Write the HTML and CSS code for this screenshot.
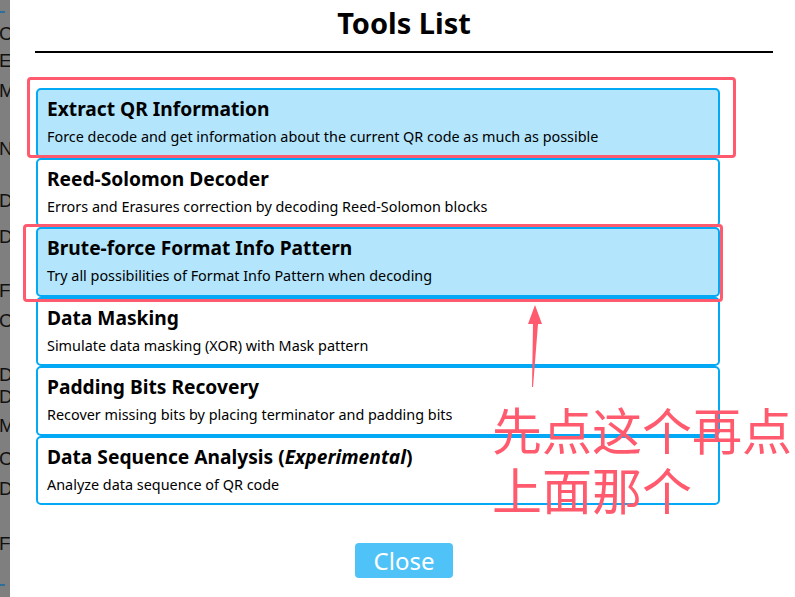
FILE: index.html
```html
<!DOCTYPE html>
<html lang="en">
<head>
<meta charset="utf-8">
<title>Tools List</title>
<link rel="stylesheet" href="styles.css">
</head>
<body>
<div class="backdrop">
  <div class="bg-rule"></div>
  <div class="l">C</div><div class="l">E</div><div class="l">M</div><div class="l">N</div>
  <div class="l">D</div><div class="l">D</div><div class="l">F</div><div class="l">C</div>
  <div class="l">D</div><div class="l">D</div><div class="l">M</div><div class="l">C</div>
  <div class="l">D</div><div class="l">F</div>
  <div class="bg-rule bottom"></div>
</div>
<div class="modal">
  <h1 class="title">Tools List</h1>
  <hr class="rule">
  <div class="list">
    <div class="card active">
      <div class="card-title">Extract QR Information</div>
      <div class="card-desc">Force decode and get information about the current QR code as much as possible</div>
    </div>
    <div class="card">
      <div class="card-title">Reed-Solomon Decoder</div>
      <div class="card-desc">Errors and Erasures correction by decoding Reed-Solomon blocks</div>
    </div>
    <div class="card active">
      <div class="card-title">Brute-force Format Info Pattern</div>
      <div class="card-desc">Try all possibilities of Format Info Pattern when decoding</div>
    </div>
    <div class="card">
      <div class="card-title">Data Masking</div>
      <div class="card-desc">Simulate data masking (XOR) with Mask pattern</div>
    </div>
    <div class="card">
      <div class="card-title">Padding Bits Recovery</div>
      <div class="card-desc">Recover missing bits by placing terminator and padding bits</div>
    </div>
    <div class="card">
      <div class="card-title">Data Sequence Analysis (<em>Experimental</em>)</div>
      <div class="card-desc">Analyze data sequence of QR code</div>
    </div>
  </div>
  <div class="footer"><button class="close-btn">Close</button></div>

  <div class="mark mark-1"></div>
  <div class="mark mark-2"></div>
  <svg class="arrow" width="30" height="90" viewBox="0 0 30 90">
    <polygon points="14,0 21,19 17,19 12,82 11,82 12,19 7,19" fill="#ff5a6e"/>
  </svg>
  <div class="note">先点这个再点<br>上面那个</div>
</div>
</body>
</html>
```
FILE: styles.css
```css
* { box-sizing: border-box; }
html, body { margin: 0; padding: 0; }
body {
  width: 795px;
  height: 597px;
  overflow: hidden;
  display: flex;
  font-family: "Noto Sans", "Open Sans", sans-serif;
  color: #000;
  background: #fff;
}
.backdrop {
  width: 10px;
  flex: none;
  background: #7f7f7f;
  overflow: hidden;
  display: flex;
  flex-direction: column;
  font-family: "Liberation Sans", sans-serif;
  font-size: 19px;
  line-height: 20px;
  color: #111;
}
.bg-rule { width: 5px; height: 2px; background: #2c6f9c; margin-top: 11px; flex: none; }
.bg-rule.bottom { margin-top: 30px; }
.l { height: 20px; flex: none; margin-left: -1px; }
.l:nth-child(2) { margin-top: 11px; }
.l:nth-child(3) { margin-top: 7px; }
.l:nth-child(4) { margin-top: 10px; }
.l:nth-child(5) { margin-top: 38px; }
.l:nth-child(6) { margin-top: 32px; }
.l:nth-child(7) { margin-top: 16px; }
.l:nth-child(8) { margin-top: 34px; }
.l:nth-child(9) { margin-top: 10px; }
.l:nth-child(10) { margin-top: 34px; }
.l:nth-child(11) { margin-top: 2px; }
.l:nth-child(12) { margin-top: 9px; }
.l:nth-child(13) { margin-top: 13px; }
.l:nth-child(14) { margin-top: 10px; }
.l:nth-child(15) { margin-top: 35px; }

.modal {
  flex: 1;
  position: relative;
  background: #fff;
  padding: 0 22px 0 25px;
}
.title {
  margin: 0;
  padding-top: 4px;
  text-align: center;
  font-size: 29px;
  line-height: 38px;
  font-weight: 700;
}
.rule {
  margin: 9px 0 0;
  border: 0;
  border-top: 2px solid #000;
  height: 0;
}
.list {
  margin: 35px 0 0 1px;
  width: 684px;
  display: flex;
  flex-direction: column;
}
.card {
  border: 2px solid #03a9f4;
  border-radius: 5px;
  padding: 7px 9px 7.5px;
  background: #fff;
}
.card.active { background: #b3e5fc; }
.card-title {
  font-size: 19.2px;
  font-weight: 700;
  line-height: 24px;
}
.card-title em { font-style: italic; }
.card-desc {
  margin-top: 5px;
  font-size: 14.4px;
  line-height: 22px;
}
.footer {
  display: flex;
  justify-content: center;
  margin-top: 38px;
}
.close-btn {
  width: 98px;
  height: 35px;
  border: 0;
  border-radius: 4px;
  background: #4fc3f7;
  color: #fff;
  font-family: "Noto Sans", "Open Sans", sans-serif;
  font-size: 24px;
  line-height: 35px;
  padding: 0;
}

.mark {
  position: absolute;
  border: 3px solid #ff5a6e;
  border-radius: 4px;
}
.mark-1 { left: 17px; top: 77px; width: 709px; height: 81px; }
.mark-2 { left: 13px; top: 224px; width: 700px; height: 78px; }
.arrow { position: absolute; left: 511px; top: 305px; }
.note {
  position: absolute;
  left: 482px;
  top: 398px;
  font-family: "Noto Sans CJK SC", sans-serif;
  font-size: 50px;
  line-height: 60px;
  color: #ff5a6e;
  white-space: nowrap;
}
```
